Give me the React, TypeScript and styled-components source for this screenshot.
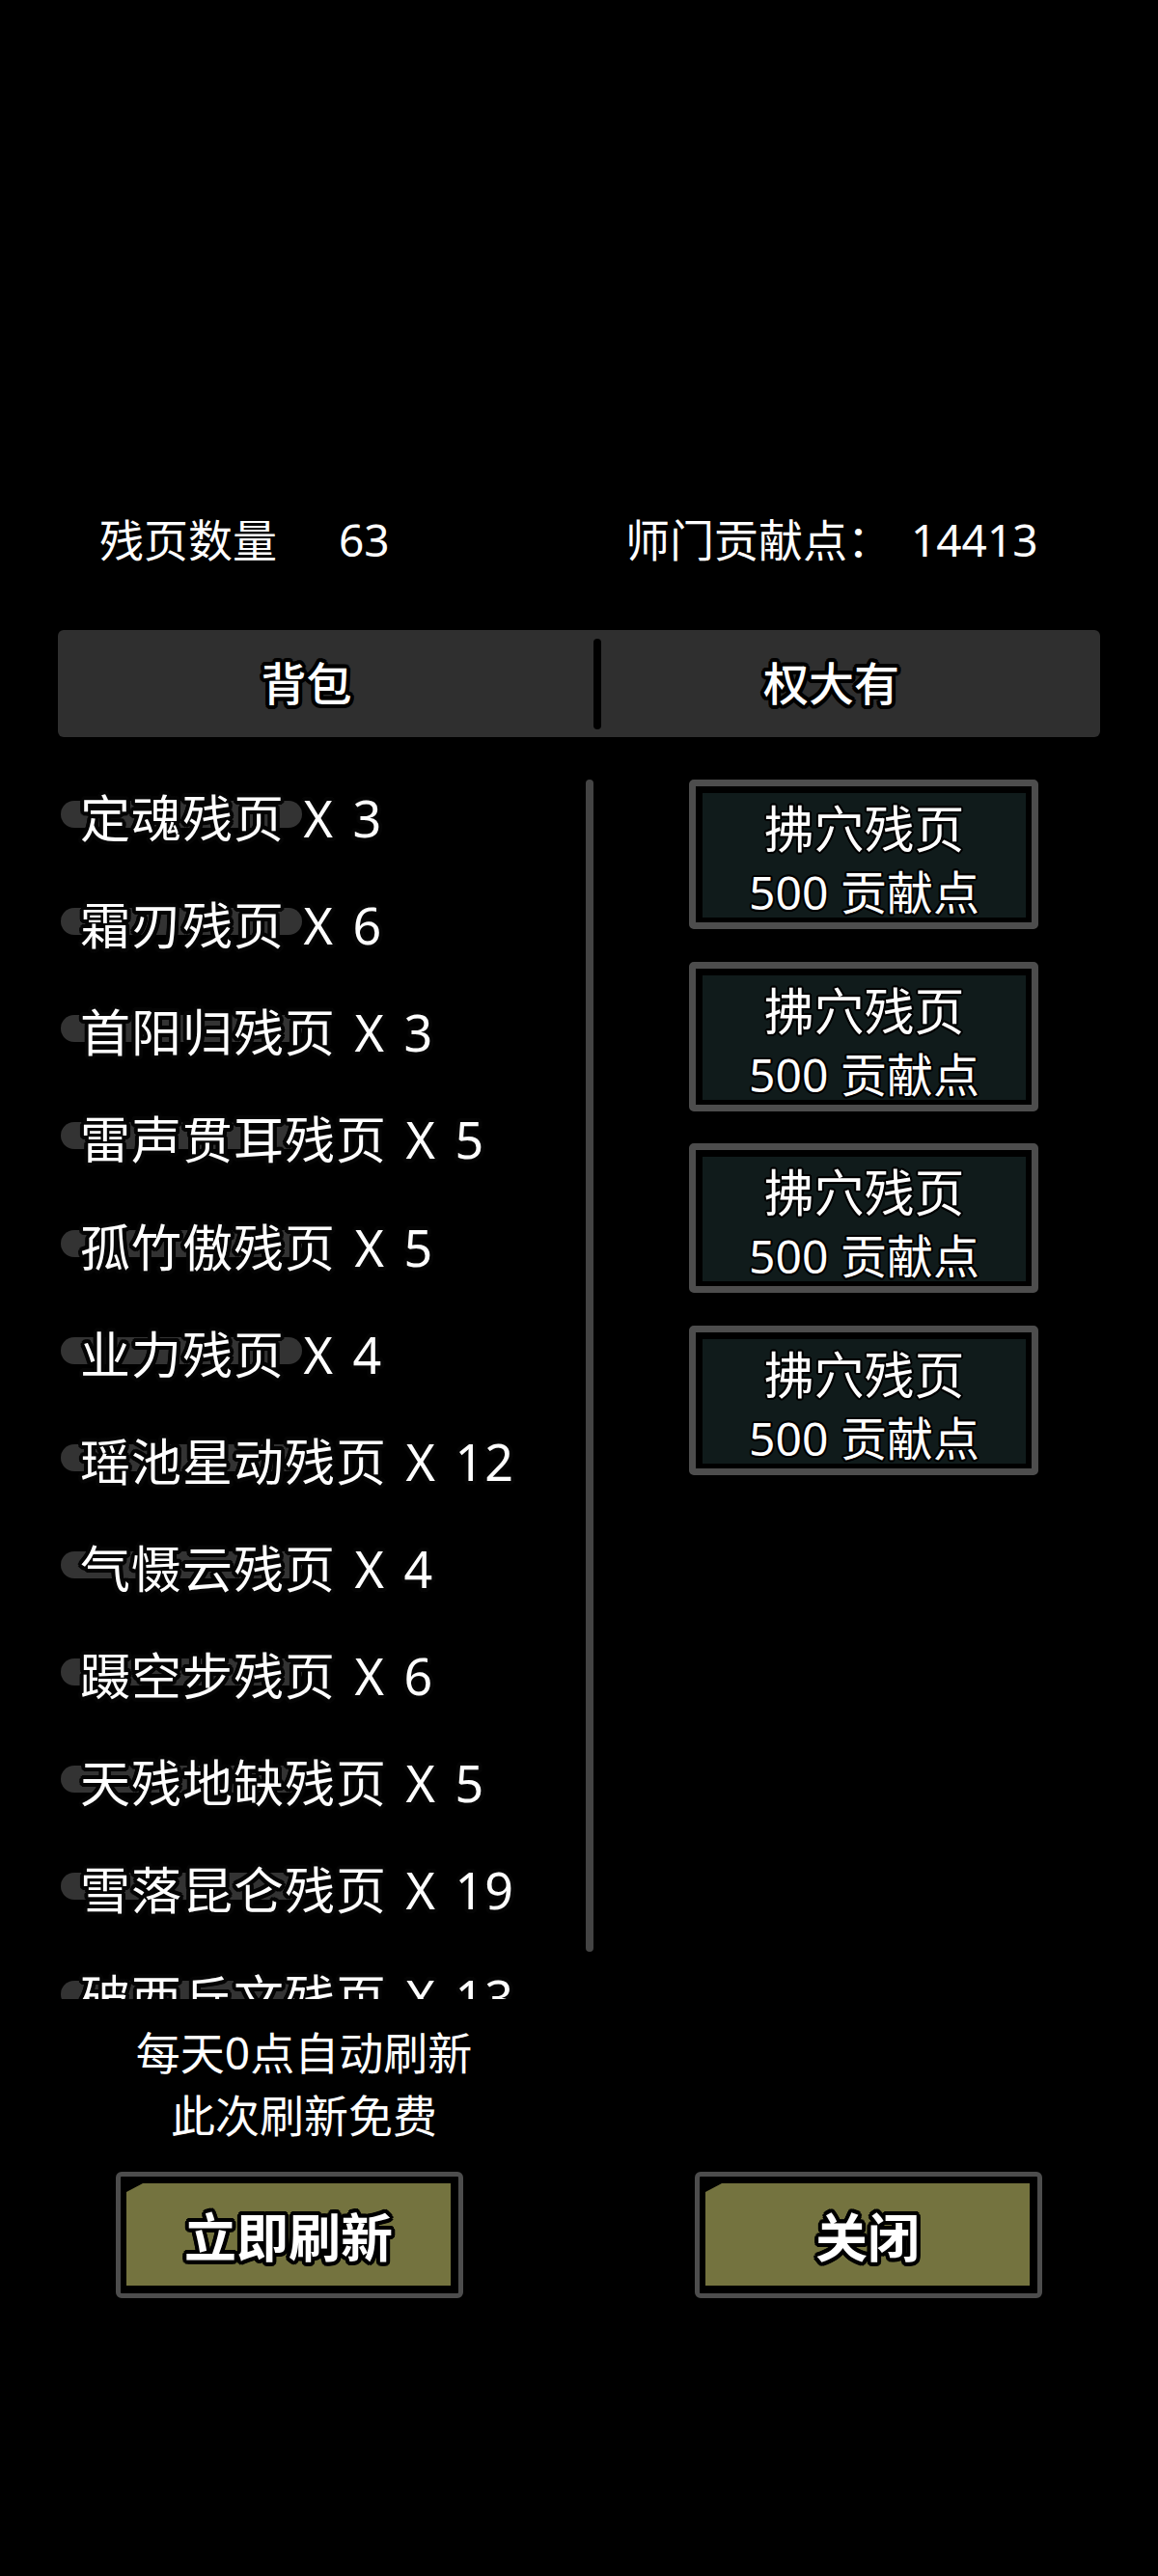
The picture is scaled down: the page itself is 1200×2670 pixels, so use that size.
import * as React from "react";
import styled, { createGlobalStyle } from "styled-components";

// text-shadow ring used as a stroke around white game text
const outline = (r: number, color = "#000"): string =>
    Array.from({ length: 16 }, (_, i) => {
        const a = (i / 16) * Math.PI * 2;
        return `${(Math.cos(a) * r).toFixed(1)}px ${(Math.sin(a) * r).toFixed(1)}px 0 ${color}`;
    }).join(", ");

const GlobalStyle = createGlobalStyle`
    html, body {
        margin: 0;
        padding: 0;
        background: #000;
    }
    body {
        font-family: "Noto Sans", "Noto Sans CJK SC", sans-serif;
        color: #fff;
    }
`;

const Page = styled.div`
    width: 1200px;
    min-height: 2670px;
    background: #000;
    padding-top: 531px;
    box-sizing: border-box;
`;

const StatsRow = styled.div`
    display: flex;
    padding-left: 103px;
    font-size: 46px;
    line-height: 56px;
`;

const StatGroup = styled.div<{ $width?: number; $gap: number }>`
    display: flex;
    gap: ${(p) => p.$gap}px;
    width: ${(p) => (p.$width ? `${p.$width}px` : "auto")};
`;

const TabBar = styled.div`
    margin: 66px 60px 0 60px;
    height: 111px;
    background: #2f2f2f;
    border-radius: 6px;
    display: grid;
    grid-template-columns: 555px 8px 1fr;
    align-items: center;
`;

const Tab = styled.div`
    text-align: center;
    padding-right: 40px;
    font-size: 47px;
    font-weight: 500;
    line-height: 1;
    text-shadow: ${outline(4)};
`;

const TabDivider = styled.div`
    width: 8px;
    height: 94px;
    background: #000;
    border-radius: 4px;
`;

const Content = styled.div`
    margin-top: 44px;
    padding: 0 60px;
    display: grid;
    grid-template-columns: 547px 8px 99px 362px;
    align-items: start;
`;

const ItemList = styled.div`
    height: 1264px;
    overflow: hidden;
`;

const ItemRow = styled.div`
    height: 111.15px;
    padding-top: 10px;
    box-sizing: border-box;
    display: grid;
    grid-template-rows: 60px;
    align-content: start;
    align-items: center;
`;

const ItemPill = styled.div`
    grid-area: 1 / 1;
    margin: -8px 0 0 3px;
    width: 250px;
    height: 28px;
    border-radius: 14px;
    background: #333;
`;

const ItemLabel = styled.div`
    grid-area: 1 / 1;
    margin-left: 23px;
    font-size: 52px;
    letter-spacing: 1px;
    word-spacing: 5px;
    line-height: 60px;
    white-space: nowrap;
    text-shadow: ${outline(4, "#050505")};
`;

const ScrollTrack = styled.div`
    width: 8px;
    height: 1215px;
    background: #444;
    border-radius: 4px;
`;

const ShopColumn = styled.div`
    grid-column: 4;
    display: flex;
    flex-direction: column;
    gap: 33.5px;
`;

const ShopButton = styled.div`
    border: 7px solid #4d4d4d;
    border-radius: 5px;
    background: #000;
    padding: 7px 6px 5px 7px;
`;

const ShopFace = styled.div`
    height: 129px;
    background: #101b1b;
    box-sizing: border-box;
    padding-top: 4px;
    text-align: center;
    line-height: 66px;
    text-shadow: ${outline(2, "#000")};
`;

const ShopTitle = styled.div`
    font-size: 52px;
`;

const ShopPrice = styled.div`
    font-size: 48px;
`;

const Caption = styled.div`
    width: 630px;
    margin-top: 22.5px;
    text-align: center;
    font-size: 46px;
    line-height: 65px;
`;

const ActionRow = styled.div`
    margin-top: 26.5px;
    display: grid;
    grid-template-columns: 600px 600px;
    justify-items: center;
`;

const ActionButton = styled.div`
    width: 360px;
    box-sizing: border-box;
    border: 5px solid #4d4d4d;
    border-radius: 6px;
    background: #000;
    padding: 7px 8px 8px 6px;
`;

const ActionFace = styled.div`
    height: 106px;
    background: #74733f;
    clip-path: polygon(17px 0, 100% 0, 100% 100%, 0 100%, 0 9px);
    display: flex;
    align-items: center;
    justify-content: center;
    font-size: 54px;
    font-weight: 700;
    text-shadow: ${outline(4)};
`;

const items: [string, number][] = [
    ["定魂残页", 3],
    ["霜刃残页", 6],
    ["首阳归残页", 3],
    ["雷声贯耳残页", 5],
    ["孤竹傲残页", 5],
    ["业力残页", 4],
    ["瑶池星动残页", 12],
    ["气慑云残页", 4],
    ["蹑空步残页", 6],
    ["天残地缺残页", 5],
    ["雪落昆仑残页", 19],
    ["破西丘文残页", 13],
];

const shop = [0, 1, 2, 3].map(() => ({ title: "拂穴残页", price: 500 }));

const App = (): JSX.Element => {
    return (
        <Page>
            <GlobalStyle />
            <StatsRow>
                <StatGroup $width={545} $gap={64}>
                    <span>残页数量</span>
                    <span>63</span>
                </StatGroup>
                <StatGroup $gap={20}>
                    <span>师门贡献点：</span>
                    <span>14413</span>
                </StatGroup>
            </StatsRow>
            <TabBar>
                <Tab>背包</Tab>
                <TabDivider />
                <Tab>权大有</Tab>
            </TabBar>
            <Content>
                <ItemList>
                    {items.map(([name, count]) => (
                        <ItemRow key={name}>
                            <ItemPill />
                            <ItemLabel>{`${name} X ${count}`}</ItemLabel>
                        </ItemRow>
                    ))}
                </ItemList>
                <ScrollTrack />
                <ShopColumn>
                    {shop.map((s, i) => (
                        <ShopButton key={i}>
                            <ShopFace>
                                <ShopTitle>{s.title}</ShopTitle>
                                <ShopPrice>{s.price} 贡献点</ShopPrice>
                            </ShopFace>
                        </ShopButton>
                    ))}
                </ShopColumn>
            </Content>
            <Caption>
                每天0点自动刷新
                <br />
                此次刷新免费
            </Caption>
            <ActionRow>
                <ActionButton>
                    <ActionFace>立即刷新</ActionFace>
                </ActionButton>
                <ActionButton>
                    <ActionFace>关闭</ActionFace>
                </ActionButton>
            </ActionRow>
        </Page>
    );
};

export default App;
